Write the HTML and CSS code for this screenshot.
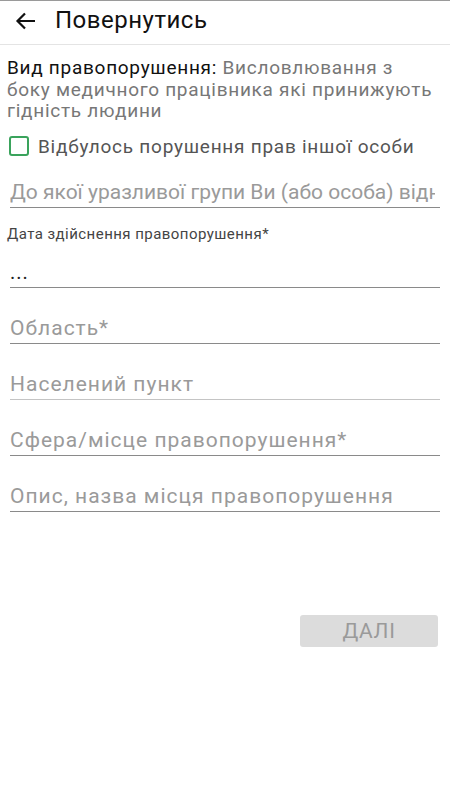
FILE: index.html
```html
<!DOCTYPE html>
<html lang="uk">
<head>
  <meta charset="UTF-8">
  <meta name="viewport" content="width=device-width, initial-scale=1.0">
  <title>Повернутись</title>
  <link rel="stylesheet" href="styles.css">
</head>
<body>
  <div class="screen">
    <!-- Header -->
    <div class="header">
      <svg class="back" width="24" height="24" viewBox="0 0 24 24">
        <path d="M21 12H3.5M11 4.5L3.5 12l7.5 7.5" fill="none" stroke="#111" stroke-width="2.2"/>
      </svg>
      <span class="title">Повернутись</span>
    </div>

    <div class="content">
      <p class="kind"><span class="kind-label">Вид правопорушення:</span> Висловлювання з боку медичного працівника які принижують гідність людини</p>

      <label class="check">
        <span class="box"></span>
        <span>Відбулось порушення прав іншої особи</span>
      </label>

      <div class="field first"><span class="ph">До якої уразливої групи Ви (або особа) відноситесь?</span></div>

      <div class="small-label">Дата здійснення правопорушення*</div>
      <div class="field date"><span class="val">...</span></div>

      <div class="field"><span class="ph">Область*</span></div>
      <div class="field light"><span class="ph">Населений пункт</span></div>
      <div class="field"><span class="ph">Сфера/місце правопорушення*</span></div>
      <div class="field"><span class="ph">Опис, назва місця правопорушення</span></div>

      <div class="actions">
        <button class="next" disabled>ДАЛІ</button>
      </div>
    </div>
  </div>
</body>
</html>
```

FILE: styles.css
```css
body {
  margin: 0;
  font-family: Roboto, "Noto Sans", sans-serif;
  background: #fff;
  color: #111;
}
.screen {
  width: 450px;
  height: 800px;
  border-top: 1px solid #9a9a9a;
  box-sizing: border-box;
}
.header {
  height: 43px;
  display: flex;
  align-items: center;
  border-bottom: 1px solid #e4e4e4;
}
.back {
  margin-left: 14px;
  margin-top: -4px;
}
.title {
  margin-left: 17px;
  font-size: 24px;
  letter-spacing: 0.5px;
  margin-top: -6px;
  color: #111;
}
.content {
  padding: 12px 10px 0 7px;
}
.kind {
  margin: 0;
  font-size: 19px;
  letter-spacing: 0.72px;
  line-height: 21.5px;
  color: #777;
}
.kind-label {
  color: #111;
}
.check {
  display: flex;
  align-items: center;
  margin-top: 13px;
  font-size: 19px;
  letter-spacing: 0.75px;
  color: #555;
}
.box {
  width: 16px;
  height: 16px;
  border: 2px solid #3aa35c;
  border-radius: 3px;
  margin-left: 2px;
  margin-right: 9px;
}
.field {
  margin-left: 3px;
  height: 36px;
  display: flex;
  align-items: flex-end;
  padding-bottom: 3px;
  box-sizing: border-box;
  border-bottom: 1.5px solid #8a8a8a;
  font-size: 21px;
  letter-spacing: 1px;
  white-space: nowrap;
  overflow: hidden;
  margin-top: 20px;
}
.field.first {
  margin-top: 14px;
  letter-spacing: 0;
}
.field.first .ph {
  overflow: hidden;
  margin-right: 5px;
}
.field.light {
  border-bottom-color: #c4c4c4;
}
.ph {
  color: #9a9a9a;
}
.small-label {
  margin-top: 17px;
  font-size: 15px;
  letter-spacing: 0.45px;
  color: #444;
}
.field.date {
  margin-top: 11px;
  height: 34px;
  padding-bottom: 3px;
}
.val {
  color: #222;
  font-size: 20px;
}
.actions {
  display: flex;
  justify-content: flex-end;
  margin-top: 103px;
  padding-right: 2px;
}
.next {
  width: 138px;
  height: 32px;
  border: none;
  border-radius: 3px;
  background: #dcdcdc;
  color: #9a9a9a;
  font-family: Roboto, sans-serif;
  font-size: 21px;
  letter-spacing: 0.7px;
  padding: 0;
}
```
